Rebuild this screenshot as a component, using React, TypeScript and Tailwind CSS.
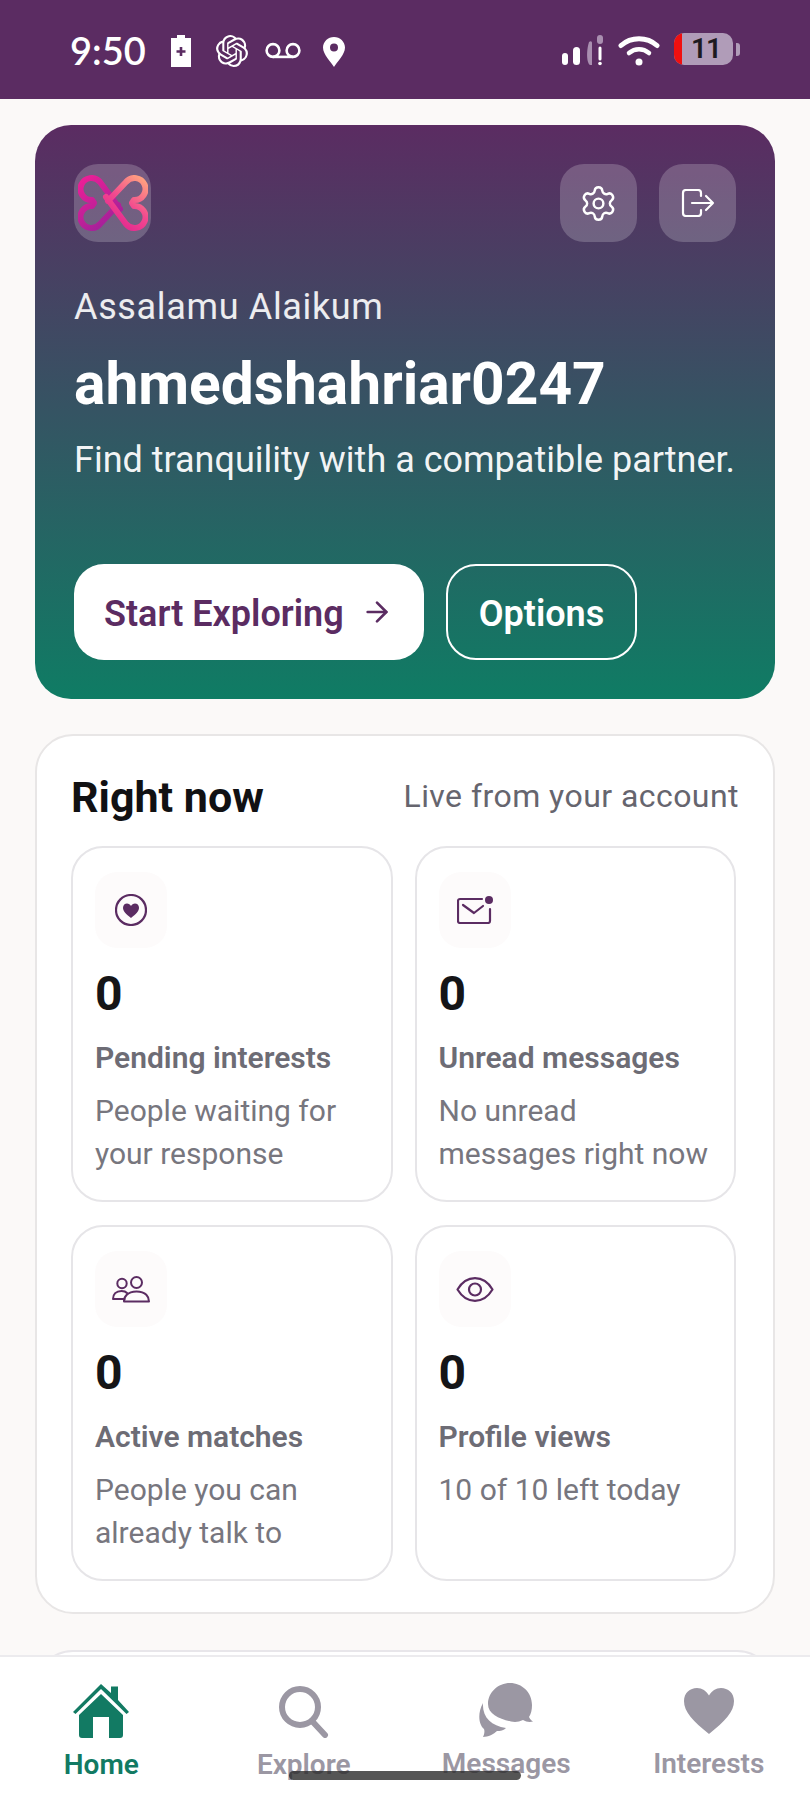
import { ArrowRight, Settings } from "lucide-react"
import { SiOpenai } from "react-icons/si"
import type { ReactNode } from "react"

const roboto = "font-['Roboto',sans-serif]"

function StatusBar() {
  return (
    <div className="h-[99px] shrink-0 bg-[#5b2c62] flex items-start text-white">
      <div className="mt-[27px] ml-[70px] w-[90px] text-[38px] leading-[46px] font-semibold font-['Lato',sans-serif]">9:50</div>
      {/* charging battery */}
      <svg className="mt-[35px] ml-[10px]" width="22" height="32" viewBox="0 0 22 32">
        <path d="M7 0h8v3h6v29H1V3h6z" fill="#fff" />
        <path d="M11 12v9M6.500 16.500h9" stroke="#5b2c62" strokeWidth="2.600" />
      </svg>
      <SiOpenai className="mt-[35px] ml-[24px]" size={32} />
      {/* voicemail */}
      <svg className="mt-[42px] ml-[17px]" width="36" height="17" viewBox="0 0 36 17" fill="none" stroke="#fff" strokeWidth="2.600">
        <circle cx="8" cy="8.500" r="6.400" />
        <circle cx="28" cy="8.500" r="6.400" />
        <path d="M8 14.900h20" />
      </svg>
      {/* location */}
      <svg className="mt-[37px] ml-[22px]" width="22" height="30" viewBox="0 0 22 30">
        <path fillRule="evenodd" d="M11 0C5 0 0 4.700 0 10.600 0 17.600 8 25 11 30c3-5 11-12.400 11-19.400C22 4.700 17 0 11 0zm0 14.400a4 4 0 1 1 0-8 4 4 0 0 1 0 8z" fill="#fff" />
      </svg>
      <div className="flex-1" />
      {/* signal */}
      <svg className="mt-[35px]" width="43" height="31" viewBox="0 0 43 31">
        <rect x="0" y="18" width="6" height="12" rx="3" fill="#fff" />
        <rect x="11" y="12" width="7" height="18" rx="3.500" fill="#fff" />
        <path d="M27 7c2-1.500 3-.5 3 1v22c-3 0-3-.5-4-3-1.500-5-1-14 1-20z" fill="#a98fb0" />
        <rect x="35" y="0" width="6" height="9" rx="3" fill="#a98fb0" />
        <path d="M38 13v11" stroke="#fff" strokeWidth="3" strokeLinecap="round" />
        <circle cx="38" cy="28.500" r="1.800" fill="#fff" />
      </svg>
      {/* wifi */}
      <svg className="mt-[35px] ml-[13px]" width="42" height="31" viewBox="0 0 42 31" fill="none" stroke="#fff" strokeLinecap="round">
        <path d="M3 10.500C13 1.500 29 1.500 39 10.500" strokeWidth="5" />
        <path d="M11 18c6-5 14-5 20 0" strokeWidth="4.500" />
        <circle cx="21" cy="27" r="3.500" fill="#fff" stroke="none" />
      </svg>
      {/* battery */}
      <div className="mt-[33px] ml-[14px] mr-[70px] flex items-center">
        <div className="relative w-[59px] h-[32px] rounded-[10px] bg-[#b09cb8] overflow-hidden flex items-center justify-center">
          <div className="absolute left-0 top-0 bottom-0 w-[8px] bg-[#f01010]" />
          <span className={`${roboto} pl-[5px] text-[#1d1a20] text-[28px] leading-none font-semibold tracking-[-1px]`}>11</span>
        </div>
        <div className="ml-[3px] w-[4px] h-[13px] rounded-r-[3px] bg-[#b09cb8]" />
      </div>
    </div>
  )
}

function LogoMark() {
  return (
    <svg width="70" height="56" viewBox="0 0 70 56" fill="none" strokeWidth="6" strokeLinejoin="round" strokeLinecap="round">
      <defs>
        <linearGradient id="leftHeart" x1="0" y1="0" x2="0.6" y2="1">
          <stop offset="0" stopColor="#ee1f96" />
          <stop offset="1" stopColor="#a3219a" />
        </linearGradient>
        <linearGradient id="rightHeart" x1="0.9" y1="0" x2="0.3" y2="1">
          <stop offset="0" stopColor="#ff9f80" />
          <stop offset="0.55" stopColor="#f2488f" />
          <stop offset="1" stopColor="#e0268f" />
        </linearGradient>
      </defs>
      {/* two sideways hearts, each a half turn of the other */}
      <path d="M42 34L22 7A11 11 0 1 0 14 25L16 28L14 31A11 11 0 1 0 22 49L40 30" stroke="url(#leftHeart)" />
      <path d="M28 22L48 49A11 11 0 1 0 56 31L54 28L56 25A11 11 0 1 0 48 7L30 26" stroke="url(#rightHeart)" />
    </svg>
  )
}

function ExitIcon() {
  return (
    <svg width="34" height="28" viewBox="0 0 34 28" fill="none" stroke="#fff" strokeWidth="2.200" strokeLinecap="round" strokeLinejoin="round">
      <path d="M20 7V4a3 3 0 0 0-3-3H5a3 3 0 0 0-3 3v20a3 3 0 0 0 3 3h12a3 3 0 0 0 3-3v-3" />
      <path d="M11 14h21M25 7l7 7-7 7" />
    </svg>
  )
}

function Hero() {
  return (
    <section className="h-[574px] rounded-[36px] bg-linear-to-b/srgb from-[#5b2c62] to-[#0f7c64] pt-[39px] pl-[39px] pr-[39px] text-white">
      <div className="flex items-start">
        <div className="w-[77px] h-[78px] rounded-[24px] bg-white/20 flex items-center justify-center">
          <LogoMark />
        </div>
        <div className="flex-1" />
        <button className="w-[77px] h-[78px] rounded-[24px] bg-white/20 flex items-center justify-center">
          <Settings size={39} strokeWidth={1.5} />
        </button>
        <button className="ml-[22px] w-[77px] h-[78px] rounded-[24px] bg-white/20 flex items-center justify-center">
          <ExitIcon />
        </button>
      </div>
      <div className={`${roboto} mt-[45px] text-[36px] leading-[40px] tracking-[0.65px] text-white/90`}>Assalamu Alaikum</div>
      <h1 className={`${roboto} mt-[25px] text-[58.7px] leading-[64px] font-bold`}>ahmedshahriar0247</h1>
      <p className={`${roboto} mt-[22px] text-[36px] leading-[44px] whitespace-nowrap text-white/95`}>Find tranquility with a compatible partner.</p>
      <div className={`${roboto} mt-[82px] flex gap-[22px]`}>
        <button className="w-[350px] h-[96px] rounded-[30px] bg-white text-[#5b2c62] flex items-center pl-[30px] pt-[3px] text-[36px] font-semibold">
          Start Exploring
          <ArrowRight className="ml-[17px] -mt-[3px]" size={32} strokeWidth={2} />
        </button>
        <button className="w-[191px] h-[96px] rounded-[30px] border-2 border-white pt-[3px] text-[36px] font-semibold">Options</button>
      </div>
    </section>
  )
}

type Stat = { icon: ReactNode; label: string; lines: string[] }

const stats: Stat[] = [
  {
    label: "Pending interests",
    lines: ["People waiting for", "your response"],
    icon: (
      <svg width="32" height="32" viewBox="0 0 32 32" fill="none">
        <circle cx="16" cy="16" r="15" stroke="#5b2c62" strokeWidth="2.200" />
        <path d="M16 24c-5-4-8-6.500-8-10.200C8 11 10 9.500 12 9.500c1.700 0 3.200 1 4 2.500.8-1.500 2.300-2.500 4-2.500 2 0 4 1.500 4 4.300C24 17.500 21 20 16 24z" fill="#5b2c62" />
      </svg>
    ),
  },
  {
    label: "Unread messages",
    lines: ["No unread", "messages right now"],
    icon: (
      <svg width="36" height="28" viewBox="0 0 36 28" fill="none" stroke="#5b2c62" strokeWidth="2.200" strokeLinecap="round" strokeLinejoin="round">
        <path d="M25 3H3a2 2 0 0 0-2 2v20a2 2 0 0 0 2 2h28a2 2 0 0 0 2-2V13" />
        <path d="M6 9l11 8 9-7" />
        <circle cx="32" cy="4" r="4" fill="#5b2c62" stroke="none" />
      </svg>
    ),
  },
  {
    label: "Active matches",
    lines: ["People you can", "already talk to"],
    icon: (
      <svg width="38" height="27" viewBox="0 0 38 27" fill="none" stroke="#5b2c62" strokeWidth="2" strokeLinecap="round" strokeLinejoin="round">
        <circle cx="10" cy="7.500" r="4.700" />
        <circle cx="24.500" cy="6.500" r="5.500" />
        <path d="M12 25.500c-.4-4 3-10 12.500-10S37 21 37 25.500z" />
        <path d="M12.500 23H1c0-4.500 3-8 8.500-8 3 0 4.500.8 5.500 2" />
      </svg>
    ),
  },
  {
    label: "Profile views",
    lines: ["10 of 10 left today"],
    icon: (
      <svg width="38" height="25" viewBox="0 0 38 25" fill="none" stroke="#5b2c62" strokeWidth="2.200">
        <path d="M1.500 12.500C6 5 12 1.200 19 1.200S32 5 36.500 12.500C32 20 26 23.800 19 23.800S6 20 1.500 12.500z" strokeLinejoin="round" />
        <circle cx="19" cy="12.500" r="6" />
      </svg>
    ),
  },
]

function StatCard({ stat }: { stat: Stat }) {
  return (
    <div className="h-[356px] rounded-[32px] border-2 border-[#e6e5e8] bg-white pl-[22px] pt-[24px]">
      <div className="w-[72px] h-[76px] rounded-[22px] bg-[#fdfbfb] flex items-center justify-center">{stat.icon}</div>
      <div className="mt-[18px] text-[48px] leading-[56px] font-bold text-[#151517]">0</div>
      <div className="mt-[18px] text-[30px] leading-[36px] font-semibold text-[#6d6c75] whitespace-nowrap">{stat.label}</div>
      <div className="mt-[13px] text-[30px] leading-[43px] text-[#77767e] whitespace-nowrap">
        {stat.lines.map((line) => (
          <div key={line}>{line}</div>
        ))}
      </div>
    </div>
  )
}

function RightNow() {
  return (
    <section className={`${roboto} mt-[35px] h-[880px] rounded-[38px] border-2 border-[#e8e6e6] bg-white pl-[34px] pr-[37px]`}>
      <div className="h-[110px] pt-[33px] flex items-start justify-between">
        <h2 className="text-[43px] leading-[56px] font-bold text-[#111113]">Right now</h2>
        <span className="text-[32px] leading-[54px] text-[#66656e] tracking-[0.45px] -mr-[3px]">Live from your account</span>
      </div>
      <div className="grid grid-cols-2 gap-x-[22px] gap-y-[23px]">
        {stats.map((stat) => (
          <StatCard key={stat.label} stat={stat} />
        ))}
      </div>
    </section>
  )
}

function BottomNav() {
  const muted = "#9b97a3"
  return (
    <nav className={`${roboto} relative h-[145px] shrink-0 bg-white border-t-2 border-[#ecebee] grid grid-cols-4`}>
      <div className="flex flex-col items-center">
        <svg className="mt-[27px]" width="58" height="54" viewBox="0 0 58 54">
          <path d="M29 0l10 9V2.500h7V16l11 12-2.500 2L29 5 3.500 30 1 28z" fill="#127a63" />
          <path d="M29 10l22 21v20a3 3 0 0 1-3 3H37V33H21v21H10a3 3 0 0 1-3-3V31z" fill="#127a63" />
        </svg>
        <span className="mt-[11px] text-[28px] leading-[32px] font-semibold text-[#127a63]">Home</span>
      </div>
      <div className="flex flex-col items-center">
        <svg className="mt-[29px]" width="50" height="52" viewBox="0 0 50 52" fill="none" stroke={muted} strokeWidth="6" strokeLinecap="round">
          <circle cx="21" cy="21" r="18" />
          <path d="M33 35l13 14" />
        </svg>
        <span className="mt-[11px] text-[28px] leading-[32px] font-semibold" style={{ color: muted }}>Explore</span>
      </div>
      <div className="flex flex-col items-center">
        <svg className="mt-[26px]" width="56" height="55" viewBox="0 0 56 55" fill={muted}>
          <path d="M32 0c12 0 22 9.500 22 22 0 5-1 9-3 12 1 2 2.500 3.500 4 4.500-3 1-7 .5-10-1.500-4 2-8 2.500-12 1.500C21 36 10 31 10 21 10 9.500 20 0 32 0z" />
          <path d="M5 20c-1 14 8 23 23 25-2 2.500-6 3-9 3-3 3-9 6-14 6 1-2 2-5 1-8C1 42-1 31 5 20z" />
        </svg>
        <span className="mt-[10px] text-[28px] leading-[32px] font-semibold" style={{ color: muted }}>Messages</span>
      </div>
      <div className="flex flex-col items-center">
        <svg className="mt-[31px]" width="50" height="46" viewBox="0 0 50 46" fill={muted}>
          <path d="M25 46C9 33 0 24 0 13 0 5 6 0 13 0c5 0 9.500 3 12 7.500C27.500 3 32 0 37 0c7 0 13 5 13 13 0 11-9 20-25 33z" />
        </svg>
        <span className="mt-[14px] text-[28px] leading-[32px] font-semibold" style={{ color: muted }}>Interests</span>
      </div>
      {/* gesture bar sits on top of the labels */}
      <div className="absolute left-[289px] top-[114px] w-[232px] h-[9px] rounded-full bg-[#2a2a2a]/80" />
    </nav>
  )
}

export default function App() {
  return (
    <div className="h-[1800px] flex flex-col overflow-hidden bg-[#fbf9f8]">
      <StatusBar />
      <main className="flex-1 min-h-0 overflow-hidden pt-[26px] pl-[35px] pr-[35px]">
        <Hero />
        <RightNow />
        <section className="mt-[36px] h-[300px] rounded-[38px] border-2 border-[#e8e6ea] bg-white" />
      </main>
      <BottomNav />
    </div>
  )
}
